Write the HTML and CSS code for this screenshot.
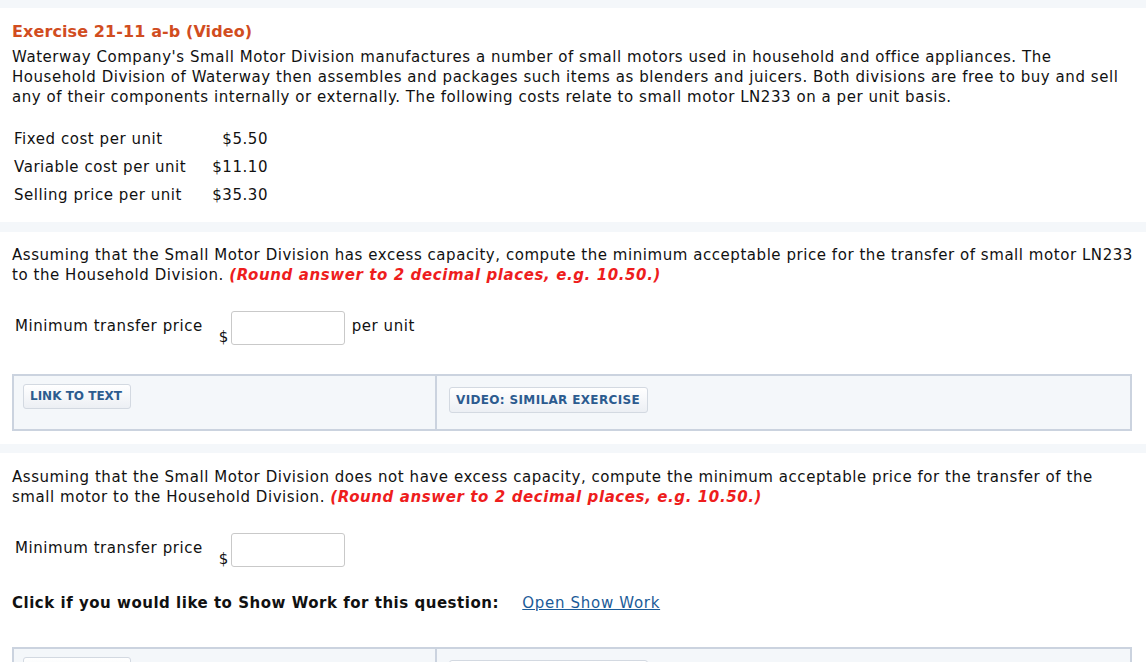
FILE: index.html
```html
<!DOCTYPE html>
<html>
<head>
<meta charset="utf-8">
<link rel="stylesheet" href="styles.css">
</head>
<body>
<div class="band band-top"></div>
<section class="sec sec1">
  <h1 class="title">Exercise 21-11 a-b (Video)</h1>
  <p class="para">Waterway Company's Small Motor Division manufactures a number of small motors used in household and office appliances. The Household Division of Waterway then assembles and packages such items as blenders and juicers. Both divisions are free to buy and sell any of their components internally or externally. The following costs relate to small motor LN233 on a per unit basis.</p>
  <table class="costs">
    <tr><td class="lbl">Fixed cost per unit</td><td class="val">$5.50</td></tr>
    <tr><td class="lbl">Variable cost per unit</td><td class="val">$11.10</td></tr>
    <tr><td class="lbl">Selling price per unit</td><td class="val">$35.30</td></tr>
  </table>
</section>
<div class="band band-mid"></div>
<section class="sec sec2">
  <p class="para">Assuming that the Small Motor Division has excess capacity, compute the minimum acceptable price for the transfer of small motor LN233 to the Household Division. <em class="hint">(Round answer to 2 decimal places, e.g. 10.50.)</em></p>
  <div class="answer">
    <span class="alabel">Minimum transfer price</span>
    <span class="dollar">$</span>
    <input class="field" type="text">
    <span class="unit">per unit</span>
  </div>
  <div class="links">
    <div class="cell cell-left"><span class="btn btn-link">LINK TO TEXT</span></div>
    <div class="cell cell-right"><span class="btn btn-video">VIDEO: SIMILAR EXERCISE</span></div>
  </div>
</section>
<div class="band band-mid2"></div>
<section class="sec sec3">
  <p class="para">Assuming that the Small Motor Division does not have excess capacity, compute the minimum acceptable price for the transfer of the small motor to the Household Division. <em class="hint">(Round answer to 2 decimal places, e.g. 10.50.)</em></p>
  <div class="answer">
    <span class="alabel">Minimum transfer price</span>
    <span class="dollar">$</span>
    <input class="field" type="text">
  </div>
  <div class="showwork">
    <span class="swlabel">Click if you would like to Show Work for this question:</span>
    <a class="swlink" href="#">Open Show Work</a>
  </div>
  <div class="links links3">
    <div class="cell cell-left"><span class="btn btn-link">LINK TO TEXT</span></div>
    <div class="cell cell-right"><span class="btn btn-video">VIDEO: SIMILAR EXERCISE</span></div>
  </div>
</section>
</body>
</html>
```
FILE: styles.css
```css
html, body {
  margin: 0;
  padding: 0;
  background: #ffffff;
  height: 662px;
  overflow: hidden;
}
body {
  font-family: "DejaVu Sans", Verdana, sans-serif;
  font-size: 15px;
  letter-spacing: 0.55px;
  color: #111111;
}
.band {
  background: #f4f7fa;
}
.band-top { height: 8px; }
.band-mid { height: 10px; }
.band-mid2 { height: 9px; }
.sec {
  padding: 0 12px;
}
.sec1 {
  padding-top: 14px;
  height: 200px;
}
.title {
  margin: 0;
  font-size: 16px;
  line-height: 20px;
  font-weight: bold;
  letter-spacing: 0.1px;
  color: #d14d1f;
}
.para {
  margin: 0;
  line-height: 20px;
  font-size: 15px;
}
.sec1 .para {
  margin-top: 5px;
}
.costs {
  border-collapse: collapse;
  margin-top: 18px;
  margin-left: 2px;
}
.costs td {
  height: 28px;
  padding: 0;
  line-height: 28px;
}
.costs .lbl {
  padding-right: 26px;
}
.costs .val {
  text-align: right;
}
.sec2 {
  padding-top: 13px;
  height: 199px;
}
.sec3 {
  padding-top: 14px;
}
.answer {
  display: flex;
  align-items: flex-start;
  margin-top: 26px;
  margin-left: 3px;
}
.alabel {
  line-height: 30px;
}
.dollar {
  margin-left: 16px;
  margin-top: 16px;
  line-height: 20px;
  width: 12px;
  letter-spacing: 0;
}
.field {
  box-sizing: border-box;
  width: 114px;
  height: 34px;
  border: 1px solid #c9c9c9;
  border-radius: 3px;
  padding: 0;
  margin: 0;
  background: #fff;
}
.unit {
  margin-left: 7px;
  line-height: 30px;
}
.links {
  display: flex;
  margin-top: 27px;
  height: 57px;
  box-sizing: border-box;
  border: 2px solid #cbd3df;
  background: #f4f7fa;
  width: 1120px;
}
.cell {
  box-sizing: border-box;
  height: 100%;
}
.cell-left {
  width: 423px;
  border-right: 2px solid #cbd3df;
  padding: 8px 0 0 9px;
}
.cell-right {
  flex: 1;
  padding: 11px 0 0 12px;
}
.btn {
  display: inline-block;
  font-family: "DejaVu Sans", Verdana, sans-serif;
  font-weight: bold;
  font-size: 12px;
  letter-spacing: 0;
  color: #2c5b8f;
  background: linear-gradient(#ffffff, #eceff4);
  border: 1px solid #d3d9e1;
  border-radius: 3px;
  box-sizing: border-box;
  line-height: 23px;
  height: 25px;
  padding: 0 6px;
}
.btn-link {
  width: 108px;
}
.btn-video {
  width: 199px;
  height: 26px;
  line-height: 24px;
  letter-spacing: 0.35px;
}
.hint {
  color: #ee1d1d;
  font-weight: bold;
  font-style: italic;
  letter-spacing: 0.6px;
}
.showwork {
  margin-top: 24px;
  line-height: 20px;
}
.swlabel {
  font-weight: bold;
  letter-spacing: 0.52px;
  color: #111;
}
.swlink {
  margin-left: 18px;
  color: #1b5b98;
  letter-spacing: 0.7px;
  text-decoration: underline;
}
.links3 {
  margin-top: 34px;
}
```
